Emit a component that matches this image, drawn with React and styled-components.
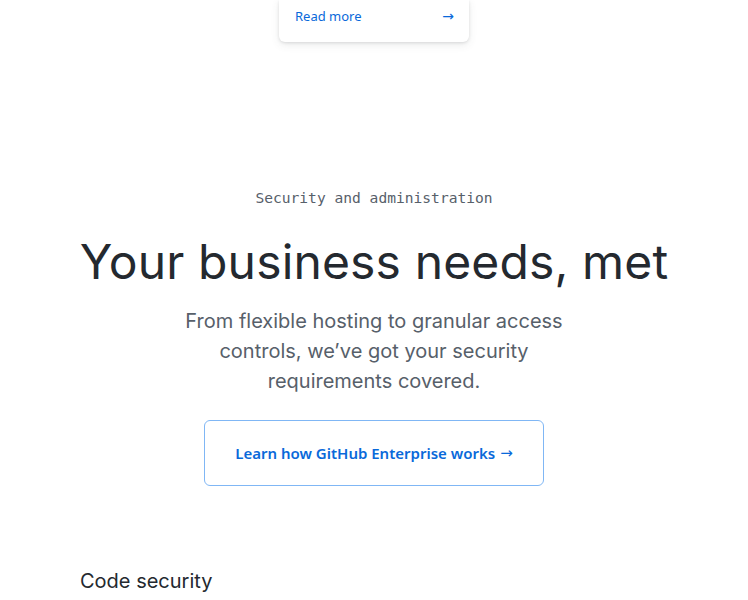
import React from "react";
import styled, { createGlobalStyle } from "styled-components";

const Global = createGlobalStyle`
  body {
    margin: 0;
    background: #ffffff;
    font-family: Inter, "Noto Sans", sans-serif;
    color: #24292f;
  }
`;

const Page = styled.div`
  width: 748px;
  height: 600px;
  overflow: hidden;
  display: flex;
  flex-direction: column;
`;

const CardRow = styled.div`
  display: flex;
  justify-content: center;
`;

const Card = styled.div`
  width: 190px;
  height: 42px;
  box-sizing: border-box;
  background: #fff;
  border-radius: 0 0 6px 6px;
  box-shadow: 0 1px 3px rgba(31, 35, 40, 0.12), 0 3px 8px rgba(66, 74, 83, 0.1);
  display: flex;
  align-items: flex-start;
  justify-content: space-between;
  padding: 6px 15px 0 16px;
`;

const CardLink = styled.a`
  font-family: "Noto Sans", sans-serif;
  font-size: 13px;
  color: #0969da;
  text-decoration: none;
  line-height: 20px;
`;

const Arrow = styled.span`
  font-family: "DejaVu Sans", sans-serif;
  font-weight: 400;
  font-size: ${(p) => p.size || 15}px;
`;

const Section = styled.section`
  display: flex;
  flex-direction: column;
  align-items: center;
  padding-top: 145px;
`;

const Eyebrow = styled.div`
  font-family: "DejaVu Sans Mono", monospace;
  font-size: 14.6px;
  color: #57606a;
  line-height: 22px;
`;

const Title = styled.h2`
  margin: 25px 0 0;
  font-family: Inter, sans-serif;
  font-weight: 400;
  font-size: 48px;
  line-height: 56px;
  letter-spacing: 0.15px;
  color: #24292f;
`;

const Lead = styled.p`
  margin: 16px 0 0;
  width: 400px;
  text-align: center;
  font-family: Inter, sans-serif;
  font-size: 20px;
  line-height: 30px;
  color: #57606a;
`;

const Button = styled.a`
  margin-top: 24px;
  width: 340px;
  height: 66px;
  box-sizing: border-box;
  border: 1px solid #80b7f5;
  border-radius: 6px;
  display: flex;
  align-items: center;
  justify-content: center;
  gap: 5px;
  font-family: "Noto Sans", sans-serif;
  font-weight: 600;
  font-size: 15px;
  color: #0969da;
  text-decoration: none;
`;

const SubHead = styled.h3`
  margin: 81px 0 0 80px;
  font-family: Inter, sans-serif;
  font-weight: 400;
  font-size: 20px;
  line-height: 28px;
  color: #24292f;
`;

export default function App() {
  return (
    <Page>
      <Global />
      <CardRow>
        <Card>
          <CardLink href="#">Read more</CardLink>
          <CardLink href="#">
            <Arrow size={14}>→</Arrow>
          </CardLink>
        </Card>
      </CardRow>
      <Section>
        <Eyebrow>Security and administration</Eyebrow>
        <Title>Your business needs, met</Title>
        <Lead>
          From flexible hosting to granular access controls, we’ve got your
          security requirements covered.
        </Lead>
        <Button href="#">
          <span>Learn how GitHub Enterprise works</span>
          <Arrow size={15}>→</Arrow>
        </Button>
      </Section>
      <SubHead>Code security</SubHead>
    </Page>
  );
}
